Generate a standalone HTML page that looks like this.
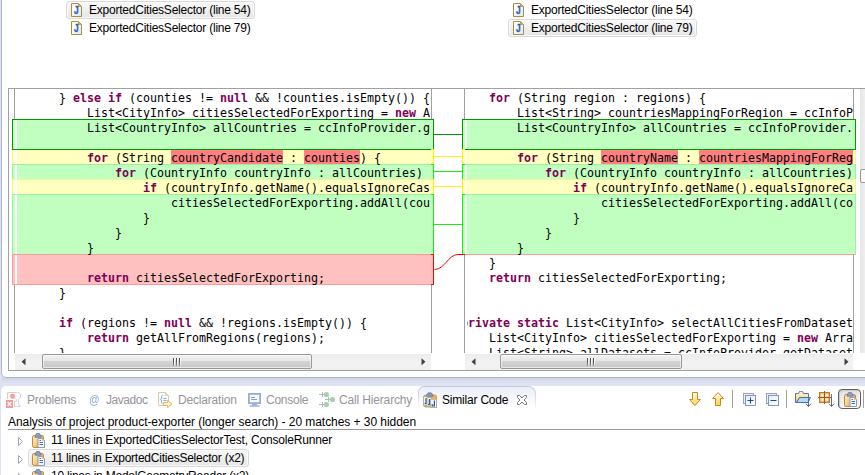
<!DOCTYPE html>
<html>
<head>
<meta charset="utf-8">
<title>Similar Code</title>
<style>
html,body{margin:0;padding:0;}
body{width:865px;height:475px;overflow:hidden;position:relative;background:#dde1f1;font-family:"Liberation Sans",sans-serif;font-size:12px;color:#000;}
.abs{position:absolute;}
/* editor area */
#editor{position:absolute;left:1px;top:-6px;width:880px;height:382px;background:#fff;border:1px solid #b0b5cb;border-radius:0 0 0 5px;}
#band{position:absolute;left:2px;top:378px;width:865px;height:8px;background:linear-gradient(#cdd1e4 0,#d6daeb 2px,#dde2f3 5px,#e0e5f6 8px);}
#bottom{position:absolute;left:1px;top:386px;width:880px;height:100px;background:#fff;border-radius:5px 0 0 0;}
/* code */
.code{position:absolute;overflow:hidden;font-family:"DejaVu Sans Mono","Liberation Mono",monospace;font-size:11.63px;line-height:15px;color:#000;}
.code div div{height:15px;white-space:pre;}
.code b{color:#7f0055;font-weight:bold;}
.code i{font-style:normal;}
.hi{position:absolute;top:150px;height:14px;background:#ff8080;z-index:6;}
.vl{position:absolute;width:1px;background:#a0a0a0;top:89px;height:264px;}
.rg{position:absolute;box-sizing:border-box;border:1px solid;}
.rg s{position:absolute;top:0;bottom:0;width:2px;background:#fff;}
.g{background:#c0ffc0;border-color:#a0f0a0;}
.y{background:#ffffc0;border-color:#f4f49c;}
.r{background:#ffc0c0;border-color:#ff9a9a;}
.sel{border-color:#009900;z-index:3;}
.L{left:12px;width:422px;border-right:none;}
.L s{left:2px;}
.R{left:462px;width:394px;}
.R s{left:2px;}
.cl,.cr{position:absolute;box-sizing:border-box;width:3px;border-top:1px solid;border-bottom:1px solid;z-index:4;}
.cl{left:431px;border-right:1px solid;}
.cr{left:462px;border-left:1px solid;}
.cg{background:#c0ffc0;border-color:#14ee14;}
.cy{background:#ffffc0;border-color:#fff400;}
.crd{background:#ffc0c0;border-color:#ff0000;}
.csel{border-color:#009900;z-index:5;}
.hl{position:absolute;height:1px;left:434px;width:28px;z-index:4;}
/* scrollbars */
.sb{position:absolute;top:354px;height:16px;background:linear-gradient(#ececec,#f3f3f3 50%,#f0f0f0);}
.th{position:absolute;top:0px;height:13px;border:1px solid #989898;border-radius:2px;background:linear-gradient(#f2f2f2 0,#e6e6e6 45%,#d4d4d4 50%,#c6c6c6 100%);box-shadow:inset 0 0 0 1px rgba(255,255,255,.6);}
.th:after{content:"";position:absolute;left:50%;top:3px;width:8px;height:8px;margin-left:-4px;background:linear-gradient(90deg,#505050 1px,rgba(255,255,255,.9) 1px,rgba(255,255,255,.9) 2px,transparent 2px) 0 0/3px 100%;-webkit-mask-image:linear-gradient(#000 40%,rgba(0,0,0,.45));mask-image:linear-gradient(#000 40%,rgba(0,0,0,.45));}
.ar{position:absolute;top:4px;width:5px;height:8px;}
/* tree items */
.selbox{position:absolute;box-sizing:border-box;height:18px;border:1px solid #d9d9d9;border-radius:3px;background:linear-gradient(#f9f9f9,#e6e6e6);box-shadow:inset 0 0 0 1px rgba(255,255,255,.7);}
.t{position:absolute;white-space:pre;line-height:14px;height:14px;}
.tab{color:#95959b;}
</style>
</head>
<body>
<div id="editor"></div>
<div id="band"></div>
<div id="bottom"></div>

<!-- top item labels -->
<div class="selbox" style="left:66px;top:1px;width:189px;"></div>
<div class="selbox" style="left:508px;top:19px;width:189px;"></div>
<svg class="abs" style="left:71px;top:3px" width="11" height="14" viewBox="0 0 11 14"><linearGradient id="jg71_3" x1="0" y1="0" x2="1" y2="1"><stop offset="0.3" stop-color="#fff"/><stop offset="1" stop-color="#d9e6f8"/></linearGradient><path d="M.5 .5H7.5L10.5 3.5V13.5H.5Z" fill="url(#jg71_3)" stroke="#b08c3a"/><path d="M7.5 1V3.5H10Z" fill="#e6c06e" stroke="#b08c3a" stroke-width=".7"/><text x="3.9" y="11" transform="scale(.8,1)" font-family="Liberation Sans, sans-serif" font-weight="bold" font-size="10.5" fill="#2a62a8" stroke="#2a62a8" stroke-width=".35">J</text></svg>
<svg class="abs" style="left:71px;top:21px" width="11" height="14" viewBox="0 0 11 14"><linearGradient id="jg71_21" x1="0" y1="0" x2="1" y2="1"><stop offset="0.3" stop-color="#fff"/><stop offset="1" stop-color="#d9e6f8"/></linearGradient><path d="M.5 .5H7.5L10.5 3.5V13.5H.5Z" fill="url(#jg71_21)" stroke="#b08c3a"/><path d="M7.5 1V3.5H10Z" fill="#e6c06e" stroke="#b08c3a" stroke-width=".7"/><text x="3.9" y="11" transform="scale(.8,1)" font-family="Liberation Sans, sans-serif" font-weight="bold" font-size="10.5" fill="#2a62a8" stroke="#2a62a8" stroke-width=".35">J</text></svg>
<svg class="abs" style="left:513px;top:3px" width="11" height="14" viewBox="0 0 11 14"><linearGradient id="jg513_3" x1="0" y1="0" x2="1" y2="1"><stop offset="0.3" stop-color="#fff"/><stop offset="1" stop-color="#d9e6f8"/></linearGradient><path d="M.5 .5H7.5L10.5 3.5V13.5H.5Z" fill="url(#jg513_3)" stroke="#b08c3a"/><path d="M7.5 1V3.5H10Z" fill="#e6c06e" stroke="#b08c3a" stroke-width=".7"/><text x="3.9" y="11" transform="scale(.8,1)" font-family="Liberation Sans, sans-serif" font-weight="bold" font-size="10.5" fill="#2a62a8" stroke="#2a62a8" stroke-width=".35">J</text></svg>
<svg class="abs" style="left:513px;top:21px" width="11" height="14" viewBox="0 0 11 14"><linearGradient id="jg513_21" x1="0" y1="0" x2="1" y2="1"><stop offset="0.3" stop-color="#fff"/><stop offset="1" stop-color="#d9e6f8"/></linearGradient><path d="M.5 .5H7.5L10.5 3.5V13.5H.5Z" fill="url(#jg513_21)" stroke="#b08c3a"/><path d="M7.5 1V3.5H10Z" fill="#e6c06e" stroke="#b08c3a" stroke-width=".7"/><text x="3.9" y="11" transform="scale(.8,1)" font-family="Liberation Sans, sans-serif" font-weight="bold" font-size="10.5" fill="#2a62a8" stroke="#2a62a8" stroke-width=".35">J</text></svg>
<div class="t" id="t1" style="left:89px;top:3px;letter-spacing:-0.227px;">ExportedCitiesSelector (line 54)</div>
<div class="t" id="t2" style="left:89px;top:21px;letter-spacing:-0.227px;">ExportedCitiesSelector (line 79)</div>
<div class="t" id="t3" style="left:531px;top:3px;letter-spacing:-0.227px;">ExportedCitiesSelector (line 54)</div>
<div class="t" id="t4" style="left:531px;top:21px;letter-spacing:-0.227px;">ExportedCitiesSelector (line 79)</div>

<!-- compare frame -->
<div class="abs" style="left:8px;top:88px;width:870px;height:281px;border:1px solid #a0a0a0;"></div>
<div class="vl" style="left:14px;"></div>
<div class="vl" style="left:431px;"></div>
<div class="vl" style="left:464px;"></div>
<div class="vl" style="left:853px;"></div>
<div class="abs" style="left:860px;top:89px;width:5px;height:264px;background:linear-gradient(90deg,#e6e6e6,#efefef);"></div>
<div class="abs" style="left:860px;top:169px;width:8px;height:14px;box-sizing:border-box;border:1px solid #9a9a9a;border-radius:2px;background:#fafafa;"></div>

<!-- diff regions left -->
<div class="rg y L" style="top:149px;height:16px;"><s></s></div>
<div class="rg g L" style="top:164px;height:16px;"><s></s></div>
<div class="rg y L" style="top:179px;height:16px;"><s></s></div>
<div class="rg g L" style="top:194px;height:61px;"><s></s></div>
<div class="rg r L" style="top:254px;height:31px;"><s></s></div>
<div class="rg g L sel" style="top:119px;height:31px;"><s></s></div>
<!-- diff regions right -->
<div class="rg y R" style="top:149px;height:16px;"><s></s></div>
<div class="rg g R" style="top:164px;height:16px;"><s></s></div>
<div class="rg y R" style="top:179px;height:16px;"><s></s></div>
<div class="rg g R" style="top:194px;height:61px;"><s></s></div>
<div class="abs" style="left:465px;top:254px;width:390px;height:1px;background:#ff9a9a;z-index:2;"></div>
<div class="rg g R sel" style="top:119px;height:31px;"><s></s></div>
<!-- centre connectors -->
<div class="cl cy" style="top:149px;height:16px;"></div><div class="cr cy" style="top:149px;height:16px;"></div><div class="hl" style="top:156px;background:#fff400;"></div>
<div class="cl cg" style="top:164px;height:16px;"></div><div class="cr cg" style="top:164px;height:16px;"></div><div class="hl" style="top:171px;background:#14ee14;"></div>
<div class="cl cy" style="top:179px;height:16px;"></div><div class="cr cy" style="top:179px;height:16px;"></div><div class="hl" style="top:186px;background:#fff400;"></div>
<div class="cl cg" style="top:194px;height:61px;"></div><div class="cr cg" style="top:194px;height:61px;"></div><div class="hl" style="top:224px;background:#14ee14;"></div>
<div class="cl crd" style="top:254px;height:31px;"></div>
<div class="cl cg csel" style="top:119px;height:30px;border-bottom:none;"></div><div class="cr cg csel" style="top:119px;height:30px;border-bottom:none;"></div><div class="hl" style="top:134px;background:#009900;z-index:5;"></div>
<svg class="abs" style="left:431px;top:250px;z-index:6;" width="36" height="24" viewBox="0 0 36 24"><path d="M3.5 19.5 C 14 19.5, 17 4.5, 27 4.5 L 34 4.5" fill="none" stroke="#ff0000" stroke-width="1"/></svg>

<div class="hi" style="left:171px;width:112px;"></div><div class="hi" style="left:304px;width:56px;"></div><div class="hi" style="left:601px;width:77px;"></div><div class="hi" style="left:699px;width:154px;"></div>
<!-- code left -->
<div class="code" style="left:15px;top:91px;width:415px;height:262px;z-index:7;"><div style="margin-left:-12px">
<div>        } <b>else</b> <b>if</b> (counties != <b>null</b> &amp;&amp; !counties.isEmpty()) {</div>
<div>            List&lt;CityInfo&gt; citiesSelectedForExporting = <b>new</b> ArrayList&lt;CityInfo&gt;();</div>
<div>            List&lt;CountryInfo&gt; allCountries = ccInfoProvider.getAllCountries();</div>
<div> </div>
<div>            <b>for</b> (String <i>countryCandidate</i> : <i>counties</i>) {</div>
<div>                <b>for</b> (CountryInfo countryInfo : allCountries) {</div>
<div>                    <b>if</b> (countryInfo.getName().equalsIgnoreCase(countryCandidate)) {</div>
<div>                        citiesSelectedForExporting.addAll(countryInfo.getCities());</div>
<div>                    }</div>
<div>                }</div>
<div>            }</div>
<div> </div>
<div>            <b>return</b> citiesSelectedForExporting;</div>
<div>        }</div>
<div> </div>
<div>        <b>if</b> (regions != <b>null</b> &amp;&amp; !regions.isEmpty()) {</div>
<div>            <b>return</b> getAllFromRegions(regions);</div>
<div>        }</div>
</div></div>

<!-- code right -->
<div class="code" style="left:467px;top:91px;width:386px;height:262px;z-index:7;"><div style="margin-left:-34px">
<div>        <b>for</b> (String region : regions) {</div>
<div>            List&lt;String&gt; countriesMappingForRegion = ccInfoProvider.getCountries(region);</div>
<div>            List&lt;CountryInfo&gt; allCountries = ccInfoProvider.getAllCountries();</div>
<div> </div>
<div>            <b>for</b> (String <i>countryName</i> : <i>countriesMappingForRegion</i>) {</div>
<div>                <b>for</b> (CountryInfo countryInfo : allCountries) {</div>
<div>                    <b>if</b> (countryInfo.getName().equalsIgnoreCase(countryName)) {</div>
<div>                        citiesSelectedForExporting.addAll(countryInfo.getCities());</div>
<div>                    }</div>
<div>                }</div>
<div>            }</div>
<div>        }</div>
<div>        <b>return</b> citiesSelectedForExporting;</div>
<div>    }</div>
<div> </div>
<div>    <b>private</b> <b>static</b> List&lt;CityInfo&gt; selectAllCitiesFromDatasets(List&lt;String&gt; datasets) {</div>
<div>        List&lt;CityInfo&gt; citiesSelectedForExporting = <b>new</b> ArrayList&lt;CityInfo&gt;();</div>
<div>        List&lt;String&gt; allDatasets = ccInfoProvider.getDatasets();</div>
</div></div>

<!-- scrollbars -->
<div class="sb" style="left:15px;width:416px;"><svg class="ar" style="left:6px;" viewBox="0 0 5 8"><path d="M4.5 .3V7.3L.5 3.8Z" fill="#404040"/></svg><div class="th" style="left:27px;width:268px;"></div><svg class="ar" style="left:406px;" viewBox="0 0 5 8"><path d="M.5 .3V7.3L4.5 3.8Z" fill="#404040"/></svg></div>
<div class="sb" style="left:465px;width:388px;"><svg class="ar" style="left:6px;" viewBox="0 0 5 8"><path d="M4.5 .3V7.3L.5 3.8Z" fill="#404040"/></svg><div class="th" style="left:35px;width:180px;"></div><svg class="ar" style="left:379px;" viewBox="0 0 5 8"><path d="M.5 .3V7.3L4.5 3.8Z" fill="#404040"/></svg></div>

<!-- bottom panel -->

<!-- tab icons -->
<svg class="abs" style="left:5px;top:391px" width="17" height="18" viewBox="0 0 17 18"><path d="M2.5 8V1.5H11.5" fill="none" stroke="#d9d2b4"/><path d="M11.5 1.5H14L15.5 3.5V6L13.5 8.5V13L15.5 15.5H9.5V10.5H11.5V8.5L9.5 7" fill="#fbfcff" stroke="#c9d1e2" stroke-width=".9"/><circle cx="7.6" cy="5.3" r="2.5" fill="#f29da3"/><rect x="1" y="9" width="7" height="8" fill="#f5979f"/><path d="M2.7 11L6.3 15M6.3 11L2.7 15" stroke="#fff" stroke-width="1.3"/><path d="M9.5 12V15" stroke="#f0c880"/></svg>
<div class="t" id="at" style="left:89px;top:393px;font-style:italic;font-size:12.5px;color:#86aed8;transform:scaleX(.82);transform-origin:0 0;">@</div>
<svg class="abs" style="left:157px;top:391px" width="17" height="18" viewBox="0 0 17 18"><path d="M1.5 1.5H8.5L11.5 4.5V14.5H1.5Z" fill="#f8fbff" stroke="#dccba0"/><path d="M8.5 1.5V4.5H11.5" fill="#efe2bc" stroke="#dccba0" stroke-width=".8"/><path d="M5.5 4.5Q4.5 4.5 4.5 5.5V7Q4.5 8 3.5 8.5Q4.5 9 4.5 10V11.5Q4.5 12.5 5.5 12.5" fill="none" stroke="#8aaad4"/><path d="M6.5 7.5H9.5M6.5 9.5H9.5" stroke="#8aaad4"/><path d="M6.5 11.5H10.5V9.5L15 13L10.5 16.5V14.5H6.5Z" fill="#fdf2c8" stroke="#dbb974"/></svg>
<svg class="abs" style="left:248px;top:393px" width="13" height="14" viewBox="0 0 13 14"><rect x=".5" y=".5" width="12" height="10" fill="#b5b8c6" stroke="#8fb0e2"/><rect x="2" y="2" width="9" height="7" fill="#f7fbff"/><path d="M3 4.5H7M3 6.5H9" stroke="#8c9fc4"/><path d="M4 11.5H9M1.5 13H11.5" stroke="#9bb6de" stroke-width="1.4"/></svg>
<svg class="abs" style="left:318px;top:391px" width="18" height="18" viewBox="0 0 18 18"><g stroke="#b2b6c6" fill="none"><path d="M1 3.5H6M4.5 1V6"/><path d="M7 8.5H12M10.5 6V11"/><path d="M1 13.5H6M4.5 11V16"/></g><g fill="#a2d3ab"><circle cx="8.4" cy="3.5" r="2.6"/><circle cx="14.5" cy="8.5" r="2.6"/><circle cx="8.4" cy="13.5" r="2.6"/></g></svg>
<div class="t tab" id="tb1" style="left:27px;top:393px;letter-spacing:-0.210px;">Problems</div>
<div class="t tab" id="tb2" style="left:106px;top:393px;letter-spacing:-0.440px;">Javadoc</div>
<div class="t tab" id="tb3" style="left:178px;top:393px;letter-spacing:-0.180px;">Declaration</div>
<div class="t tab" id="tb4" style="left:266px;top:393px;letter-spacing:-0.250px;">Console</div>
<div class="t tab" id="tb5" style="left:339px;top:393px;letter-spacing:-0.154px;">Call Hierarchy</div>
<div class="abs" id="acttab" style="left:418px;top:386px;width:118px;height:25px;border-radius:6px 8px 0 0;background:linear-gradient(#c3c8de,#d5d9ea 40%,#fff 100%);"><div class="abs" style="left:1px;top:1px;right:1px;bottom:0;border-radius:5px 7px 0 0;background:linear-gradient(#eceef8,#f6f7fc 45%,#fff 85%);"></div></div>
<svg class="abs" style="left:423px;top:392px" width="15" height="16" viewBox="0 0 15 16"><rect x="1" y="3" width="12.5" height="12" rx="1.5" fill="#efb25a" stroke="#cc8f3a" stroke-width=".8"/><path d="M3.2 4.3L4.4 1.6Q4.6 .8 5.4 .8H8Q8.8 .8 9 1.6L10.2 4.3Z" fill="#8398bd" stroke="#667ca4" stroke-width=".7"/><g fill="#f1f6fe" stroke="#b3a477" stroke-width=".8"><rect x=".4" y="4.4" width="4.6" height="9.2"/><rect x="4" y="5.6" width="4.6" height="9"/><rect x="7.6" y="7.2" width="6" height="8.4"/></g><g stroke="#2a5aa2" stroke-width="1.2" fill="none"><path d="M3 6V11.6H1.6"/><path d="M6.4 7V12.6H5"/><path d="M11.4 8.6V14H9.2V12"/></g></svg>
<svg class="abs" style="left:516px;top:394px" width="12" height="12" viewBox="0 0 12 12"><path d="M1.5 1.5L3.5 1.5L6 4L8.5 1.5L10.5 1.5L10.5 3.5L8 6L10.5 8.5L10.5 10.5L8.5 10.5L6 8L3.5 10.5L1.5 10.5L1.5 8.5L4 6L1.5 3.5Z" fill="#fff" stroke="#6d6d6d" stroke-width=".9"/></svg>
<div class="t" id="tb6" style="left:442px;top:393px;letter-spacing:-0.200px;">Similar Code</div>

<!-- toolbar -->
<svg class="abs" style="left:689px;top:392px" width="12" height="14" viewBox="0 0 12 14"><linearGradient id="ag1" x1="0" y1="0" x2="0" y2="1"><stop offset="0" stop-color="#fffdf0"/><stop offset="1" stop-color="#fbcf4c"/></linearGradient><path d="M3.5 .5H8.5V7.5H11.5L6 13.5L.5 7.5H3.5Z" fill="url(#ag1)" stroke="#c98916" stroke-linejoin="round"/></svg>
<svg class="abs" style="left:712px;top:392px" width="12" height="14" viewBox="0 0 12 14"><linearGradient id="ag2" x1="0" y1="0" x2="0" y2="1"><stop offset="0" stop-color="#fffdf0"/><stop offset="1" stop-color="#fbcf4c"/></linearGradient><path d="M6 .5L11.5 6.5H8.5V13.5H3.5V6.5H.5Z" fill="url(#ag2)" stroke="#c98916" stroke-linejoin="round"/></svg>
<div class="abs" style="left:732px;top:390px;width:1px;height:18px;background:#a0a0a0;"></div>
<svg class="abs" style="left:743px;top:393px" width="13" height="13" viewBox="0 0 13 13"><linearGradient id="eg1" x1="0" y1="0" x2="1" y2="1"><stop offset="0" stop-color="#d9eefb"/><stop offset="1" stop-color="#fff"/></linearGradient><rect x=".5" y=".5" width="10" height="10" fill="#dff0fb" stroke="#9fa2bd"/><rect x="2.5" y="2.5" width="10" height="10" fill="url(#eg1)" stroke="#9194b0"/><path d="M4.5 7.5H10.5M7.5 4.5V10.5" stroke="#1c4b82"/></svg>
<svg class="abs" style="left:766px;top:393px" width="13" height="13" viewBox="0 0 13 13"><linearGradient id="eg2" x1="0" y1="0" x2="1" y2="1"><stop offset="0" stop-color="#d9eefb"/><stop offset="1" stop-color="#fff"/></linearGradient><rect x=".5" y=".5" width="10" height="10" fill="#dff0fb" stroke="#9fa2bd"/><rect x="2.5" y="2.5" width="10" height="10" fill="url(#eg2)" stroke="#9194b0"/><path d="M4.5 7.5H10.5" stroke="#1c4b82"/></svg>
<div class="abs" style="left:786px;top:390px;width:1px;height:18px;background:#a0a0a0;"></div>
<svg class="abs" style="left:794px;top:390px" width="18" height="18" viewBox="0 0 18 18"><linearGradient id="fy" x1="0" y1="0" x2="0" y2="1"><stop offset="0" stop-color="#fff7cf"/><stop offset="1" stop-color="#f6cb55"/></linearGradient><linearGradient id="ar1" x1="0" y1="0" x2="0" y2="1"><stop offset="0" stop-color="#3a7cc8"/><stop offset="1" stop-color="#5a6678"/></linearGradient><path d="M1.5 3.5H4.5L5.5 1.5H8.5L9.5 3.5H14.5V8H5.5L2.5 12.5H1.5Z" fill="url(#fy)" stroke="#4563b8" stroke-width=".9"/><path d="M5.5 1.5H8.5" stroke="#8a94b0"/><path d="M2.5 12.5L5.5 7.5H16.5L14 12.5Z" fill="#b4d9f2" stroke="#3b5cb6" stroke-width=".9"/><rect x="14" y="4" width="1" height="12" fill="url(#ar1)"/><path d="M12 13.8L14.5 16.5L17 13.8" fill="none" stroke="#5a6678"/></svg>
<svg class="abs" style="left:817px;top:390px" width="19" height="18" viewBox="0 0 19 18"><radialGradient id="gc"><stop offset="0" stop-color="#fff3cf"/><stop offset="1" stop-color="#f3cf98"/></radialGradient><linearGradient id="ar2" x1="0" y1="0" x2="0" y2="1"><stop offset="0" stop-color="#3a7cc8"/><stop offset="1" stop-color="#5a6678"/></linearGradient><rect x="2.75" y="2.75" width="9.5" height="9.5" fill="#f6d7a2" stroke="#c97a22" stroke-width="1.5"/><rect x="3.5" y="3.5" width="3.5" height="3.5" fill="url(#gc)"/><rect x="8" y="3.5" width="3.5" height="3.5" fill="url(#gc)"/><rect x="3.5" y="8" width="3.5" height="3.5" fill="url(#gc)"/><rect x="8" y="8" width="3.5" height="3.5" fill="url(#gc)"/><path d="M7.5 1V14M1 7.5H14" stroke="#9a5a28" stroke-width="1"/><rect x="14" y="4" width="1" height="12" fill="url(#ar2)"/><path d="M12 13.8L14.5 16.5L17 13.8" fill="none" stroke="#5a6678"/></svg>
<div class="abs" style="left:838px;top:389px;width:23px;height:20px;box-sizing:border-box;border:1px solid #5e5e5e;border-radius:4px;background:linear-gradient(#e2e2e2,#ededed 50%,#f4f4f4);box-shadow:inset 1px 1px 1px #c8c8c8,inset -1px -1px 0 #fbfbfb;"></div>
<svg class="abs" style="left:844px;top:392px" width="14" height="16" viewBox="0 0 14 16"><linearGradient id="cb844_392" x1="0" y1="0" x2="1" y2="0.6"><stop offset="0" stop-color="#fdeed0"/><stop offset="0.45" stop-color="#f7d493"/><stop offset="1" stop-color="#e59c3c"/></linearGradient><rect x=".5" y="2.5" width="11" height="12" rx="1.6" fill="url(#cb844_392)" stroke="#c08a36"/><path d="M2.8 4.2L3.8 2Q4 .4 5 .4H7Q8 .4 8.2 2L9.2 4.2Z" fill="#8da0c2" stroke="#6178a2" stroke-width=".8"/><path d="M6 5.5H10.5L12.5 7.5V14.5H6Z" fill="#f4f8fe" stroke="#8f9cb8"/><path d="M10.5 5.5V7.5H12.5Z" fill="#ecd9a0" stroke="#b8a674" stroke-width=".6"/><path d="M7.5 7.5H9M7.5 9.5H11M7.5 11.5H11" stroke="#4a72b4"/></svg>
<div class="abs" style="left:863px;top:390px;width:1px;height:18px;background:#a0a0a0;"></div>
<div class="t" id="an" style="left:8px;top:415px;letter-spacing:-0.049px;">Analysis of project product-exporter (longer search) - 20 matches + 30 hidden</div>
<div class="abs" style="left:8px;top:429px;width:860px;height:1px;background:#9a9a9a;"></div>
<div class="selbox" style="left:28px;top:449px;width:221px;"></div>
<svg class="abs" style="left:18px;top:437px" width="6" height="10" viewBox="0 0 6 10"><path d="M.5 .5L4.5 4.5L.5 8.5Z" fill="#fff" stroke="#a6a6a6"/></svg><svg class="abs" style="left:32px;top:433px" width="14" height="16" viewBox="0 0 14 16"><linearGradient id="cb32_433" x1="0" y1="0" x2="1" y2="0.6"><stop offset="0" stop-color="#fdeed0"/><stop offset="0.45" stop-color="#f7d493"/><stop offset="1" stop-color="#e59c3c"/></linearGradient><rect x=".5" y="2.5" width="11" height="12" rx="1.6" fill="url(#cb32_433)" stroke="#c08a36"/><path d="M2.8 4.2L3.8 2Q4 .4 5 .4H7Q8 .4 8.2 2L9.2 4.2Z" fill="#8da0c2" stroke="#6178a2" stroke-width=".8"/><path d="M6 5.5H10.5L12.5 7.5V14.5H6Z" fill="#f4f8fe" stroke="#8f9cb8"/><path d="M10.5 5.5V7.5H12.5Z" fill="#ecd9a0" stroke="#b8a674" stroke-width=".6"/><path d="M7.5 7.5H9M7.5 9.5H11M7.5 11.5H11" stroke="#4a72b4"/></svg>
<svg class="abs" style="left:18px;top:455px" width="6" height="10" viewBox="0 0 6 10"><path d="M.5 .5L4.5 4.5L.5 8.5Z" fill="#fff" stroke="#a6a6a6"/></svg><svg class="abs" style="left:32px;top:451px" width="14" height="16" viewBox="0 0 14 16"><linearGradient id="cb32_451" x1="0" y1="0" x2="1" y2="0.6"><stop offset="0" stop-color="#fdeed0"/><stop offset="0.45" stop-color="#f7d493"/><stop offset="1" stop-color="#e59c3c"/></linearGradient><rect x=".5" y="2.5" width="11" height="12" rx="1.6" fill="url(#cb32_451)" stroke="#c08a36"/><path d="M2.8 4.2L3.8 2Q4 .4 5 .4H7Q8 .4 8.2 2L9.2 4.2Z" fill="#8da0c2" stroke="#6178a2" stroke-width=".8"/><path d="M6 5.5H10.5L12.5 7.5V14.5H6Z" fill="#f4f8fe" stroke="#8f9cb8"/><path d="M10.5 5.5V7.5H12.5Z" fill="#ecd9a0" stroke="#b8a674" stroke-width=".6"/><path d="M7.5 7.5H9M7.5 9.5H11M7.5 11.5H11" stroke="#4a72b4"/></svg>
<svg class="abs" style="left:18px;top:473px" width="6" height="10" viewBox="0 0 6 10"><path d="M.5 .5L4.5 4.5L.5 8.5Z" fill="#fff" stroke="#a6a6a6"/></svg><svg class="abs" style="left:32px;top:469px" width="14" height="16" viewBox="0 0 14 16"><linearGradient id="cb32_469" x1="0" y1="0" x2="1" y2="0.6"><stop offset="0" stop-color="#fdeed0"/><stop offset="0.45" stop-color="#f7d493"/><stop offset="1" stop-color="#e59c3c"/></linearGradient><rect x=".5" y="2.5" width="11" height="12" rx="1.6" fill="url(#cb32_469)" stroke="#c08a36"/><path d="M2.8 4.2L3.8 2Q4 .4 5 .4H7Q8 .4 8.2 2L9.2 4.2Z" fill="#8da0c2" stroke="#6178a2" stroke-width=".8"/><path d="M6 5.5H10.5L12.5 7.5V14.5H6Z" fill="#f4f8fe" stroke="#8f9cb8"/><path d="M10.5 5.5V7.5H12.5Z" fill="#ecd9a0" stroke="#b8a674" stroke-width=".6"/><path d="M7.5 7.5H9M7.5 9.5H11M7.5 11.5H11" stroke="#4a72b4"/></svg>
<div class="t" id="r1" style="left:51px;top:433px;letter-spacing:-0.181px;">11 lines in ExportedCitiesSelectorTest, ConsoleRunner</div>
<div class="t" id="r2" style="left:51px;top:451px;letter-spacing:-0.235px;">11 lines in ExportedCitiesSelector (x2)</div>
<div class="t" id="r3" style="left:51px;top:469px;letter-spacing:-0.225px;">10 lines in ModelGeometryReader (x2)</div>
</body>
</html>
